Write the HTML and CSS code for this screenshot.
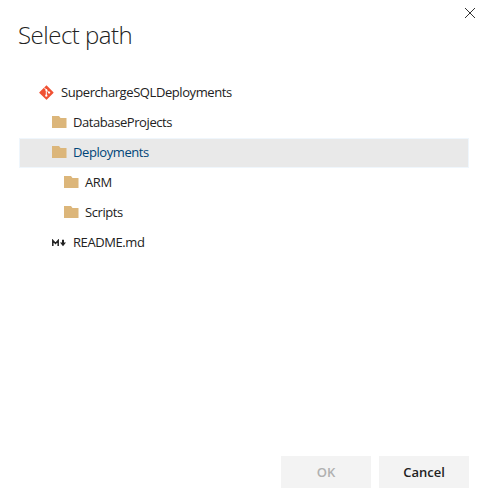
FILE: index.html
```html
<!DOCTYPE html>
<html lang="en">
<head>
<meta charset="utf-8">
<title>Select path</title>
<link rel="stylesheet" href="styles.css">
</head>
<body>
<svg class="defs" width="0" height="0" aria-hidden="true">
  <symbol id="folder" viewBox="0 0 15 12"><path fill="#dcb67a" d="M0 0h7l1.5 2h6v10H0z"/></symbol>
</svg>
<main class="dialog">
  <button class="close" aria-label="Close"><svg width="12" height="12" viewBox="0 0 12 12"><path d="M1 1l10 10M11 1L1 11" stroke="#333" stroke-width="1" fill="none"/></svg></button>
  <h1 class="title">Select path</h1>
  <ul class="tree">
    <li class="row root"><svg class="icon" width="15" height="15" viewBox="0 0 15 15"><path fill="#f05133" d="M7.5 0.3l6.9 6.9q.4.4 0 .8l-6.5 6.5q-.4.4-.8 0L.4 8q-.4-.4 0-.8z"/><path d="M5 2.5l2.3 2.4v5.8M7.3 4.9l2.8 2.7" stroke="#fff" fill="none"/><g fill="#fff"><circle cx="7.3" cy="4.9" r="1"/><circle cx="7.3" cy="10.7" r="1.15"/><circle cx="10.1" cy="7.6" r="1.15"/></g></svg><span class="label">SuperchargeSQLDeployments</span></li>
    <li class="row level1"><svg class="icon" width="15" height="12"><use href="#folder"/></svg><span class="label">DatabaseProjects</span></li>
    <li class="row level1 selected"><svg class="icon" width="15" height="12"><use href="#folder"/></svg><span class="label">Deployments</span></li>
    <li class="row level2"><svg class="icon" width="15" height="12"><use href="#folder"/></svg><span class="label">ARM</span></li>
    <li class="row level2"><svg class="icon" width="15" height="12"><use href="#folder"/></svg><span class="label">Scripts</span></li>
    <li class="row level1"><svg class="icon markdown" width="15" height="8" viewBox="0 0 15 8"><path d="M.8 7V1.5L3.5 4.5 6.2 1.5V7" stroke="#222" stroke-width="1.5" fill="none"/><path fill="#222" d="M10 .8h2v2.7h2L11 7.2 8 3.5h2z"/></svg><span class="label">README.md</span></li>
  </ul>
  <footer class="actions"><button class="button" disabled>OK</button><button class="button">Cancel</button></footer>
</main>
</body>
</html>
```
FILE: styles.css
```css
* { box-sizing: border-box; }
body { margin: 0; background: #fff; color: #222; font-family: "Open Sans", "Noto Sans", sans-serif; }
.defs { position: absolute; }
.dialog { position: relative; display: flex; flex-direction: column; height: 501px; padding: 18px 19px 13px; }
.close { position: absolute; top: 7px; right: 12px; width: 12px; height: 12px; padding: 0; border: 0; background: none; }
.close svg { display: block; }
.title { margin: 0 0 0 -1px; height: 34px; line-height: 34px; font-size: 24px; font-weight: 300; letter-spacing: -0.5px; white-space: nowrap; }
.tree { list-style: none; margin: 26px 0 0; padding: 0; }
.row { display: flex; align-items: center; height: 30px; padding-bottom: 2px; border: 1px solid transparent; font-size: 13px; white-space: nowrap; }
.root { padding-left: 19px; }
.root .icon { margin-right: 7px; }
.level1 { padding-left: 32px; }
.level2 { padding-left: 44px; }
.icon { flex: none; margin-right: 6px; }
.markdown { position: relative; top: 1px; }
.selected { background: #e9e9e9; border-color: #eff6fc; color: #004578; }
.label { line-height: 20px; letter-spacing: -0.42px; }
.actions { display: flex; justify-content: flex-end; gap: 8px; margin-top: auto; }
.button { width: 90px; height: 32px; padding: 0; border: 0; background: #f3f3f3; color: #222; font: 600 13px "Open Sans", "Noto Sans", sans-serif; }
.button:disabled { color: #b0b0b0; }
```
